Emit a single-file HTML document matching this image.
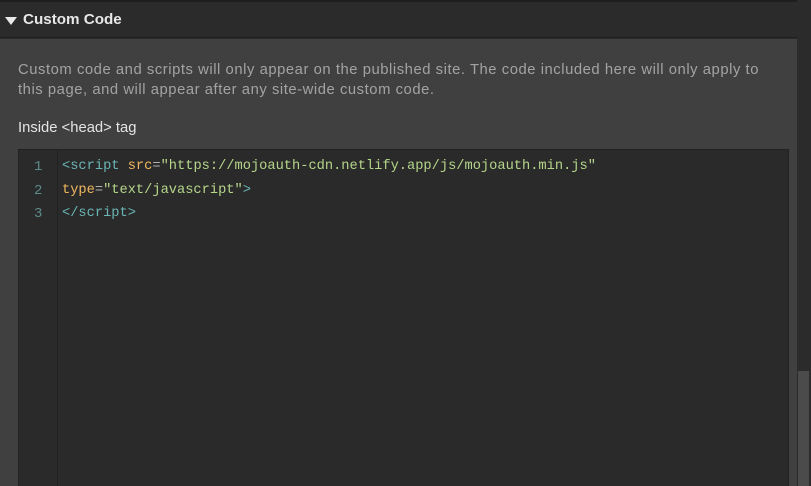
<!DOCTYPE html>
<html><head><style>
html,body{margin:0;width:811px;height:486px;overflow:hidden}
body{background:#2b2b2b;font-family:"Liberation Sans",sans-serif;position:relative}
.hdr{position:absolute;left:0;top:0;width:797px;height:38px;background:#2b2b2b;border-top:2px solid #1e1e1e;box-sizing:border-box;border-bottom:1px solid #1f1f1f}
.hdr .t{position:absolute;left:23px;top:9px;color:#e8e8e8;font-weight:bold;font-size:15.2px}
.tri{position:absolute;left:5px;top:15px;width:0;height:0;border-left:6px solid transparent;border-right:6px solid transparent;border-top:8px solid #e8e8e8}
.panel{position:absolute;left:0;top:39px;width:797px;height:447px;background:#404040;overflow:hidden}
.desc{position:absolute;left:18px;top:21px;width:770px;color:#a3a3a3;font-size:14.8px;line-height:20px;white-space:nowrap;letter-spacing:0.55px}
.lbl{position:absolute;left:18px;top:81px;color:#e4e4e4;font-size:14.8px}
.ed{position:absolute;left:18px;top:110px;width:771px;height:337px;background:#2a2a2a;border:1px solid #222;border-bottom:none;box-sizing:border-box}
.gut{position:absolute;left:0;top:0;width:38px;height:100%;border-right:1px solid #222}
.ln{position:absolute;left:15px;color:#5d8a8a;font-family:"Liberation Mono",monospace;font-size:14px}
.code{position:absolute;left:43px;font-family:"Liberation Mono",monospace;font-size:13.7px;color:#b5d68a;white-space:pre}
.tg{color:#6ab5b5}.at{color:#f0b860}.eq{color:#b0b0b0}
.sb{position:absolute;left:797px;top:0;width:14px;height:486px;background:#2b2b2b}
.th{position:absolute;left:798px;top:371px;width:11px;height:115px;background:#4b4b4b}
</style></head><body>
<div class="hdr"><div class="tri"></div><div class="t">Custom Code</div></div>
<div class="panel">
<div class="desc">Custom code and scripts will only appear on the published site. The code included here will only apply to<br>this page, and will appear after any site-wide custom code.</div>
<div class="lbl">Inside &lt;head&gt; tag</div>
<div class="ed"><div class="gut"></div>
<div class="ln" style="top:9px">1</div><div class="ln" style="top:33px">2</div><div class="ln" style="top:56px">3</div>
<div class="code" style="top:9px"><span class="tg">&lt;script</span> <span class="at">src</span><span class="eq">=</span>"https://mojoauth-cdn.netlify.app/js/mojoauth.min.js"</div>
<div class="code" style="top:33px"><span class="at">type</span><span class="eq">=</span>"text/javascript"<span class="tg">&gt;</span></div>
<div class="code" style="top:56px"><span class="tg">&lt;/script&gt;</span></div>
</div>
</div>
<div class="sb"></div><div class="th"></div>
</body></html>
